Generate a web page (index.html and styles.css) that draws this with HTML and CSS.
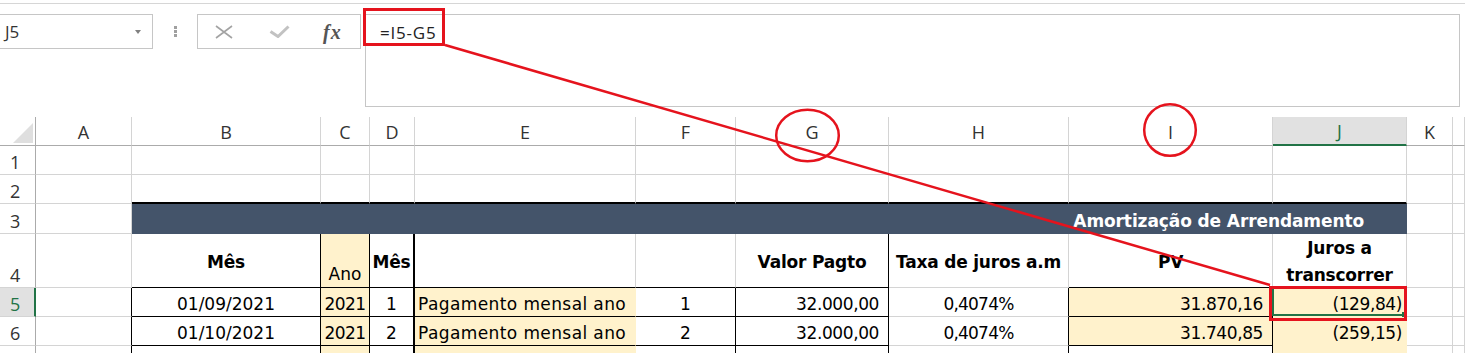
FILE: index.html
```html
<!DOCTYPE html>
<html lang="pt-BR">
<head>
    <meta charset="UTF-8">
    <meta name="viewport" content="width=device-width, initial-scale=1.0">
    <link rel="stylesheet" href="styles.css">
    <title>Amortização de Arrendamento</title>
</head>
<body>

    <div class="ribbon-edge"></div>

    <div class="formula-bar">
        <div class="name-box"><span>J5</span><span class="caret"></span></div>
        <div class="grip"><i></i><i></i><i></i></div>
        <div class="fx-box">
            <svg class="ico-x" width="18" height="14" viewBox="0 0 18 14"><path d="M1 1L17 13M17 1L1 13" stroke="#a3a3a3" stroke-width="1.6" fill="none"/></svg>
            <svg class="ico-ok" width="21" height="13" viewBox="0 0 21 13"><path d="M1.5 6.5L9 11.5L19.5 1.5" stroke="#c2c2c2" stroke-width="3" fill="none"/></svg>
            <span class="fx">fx</span>
        </div>
        <div class="formula-input">=I5-G5</div>
    </div>

    <div class="sheet">
        <!-- column headers -->
        <div class="corner"></div>
        <div class="ch">A</div>
        <div class="ch">B</div>
        <div class="ch">C</div>
        <div class="ch">D</div>
        <div class="ch">E</div>
        <div class="ch">F</div>
        <div class="ch">G</div>
        <div class="ch">H</div>
        <div class="ch">I</div>
        <div class="ch sel-col">J</div>
        <div class="ch">K</div>
        <div class="ch"></div>

        <!-- row 1 -->
        <div class="rh">1</div>
        <div></div><div></div><div></div><div></div><div></div><div></div>
        <div></div><div></div><div></div><div></div><div></div><div></div>

        <!-- row 2 -->
        <div class="rh">2</div>
        <div></div>
        <div class="top-rule"></div><div class="top-rule"></div><div class="top-rule"></div>
        <div class="top-rule"></div><div class="top-rule"></div><div class="top-rule"></div>
        <div class="top-rule"></div><div class="top-rule"></div><div class="top-rule"></div>
        <div></div><div></div>

        <!-- row 3 -->
        <div class="rh">3</div>
        <div></div>
        <div class="bar">Amortização de Arrendamento</div>
        <div></div><div></div>

        <!-- row 4 -->
        <div class="rh">4</div>
        <div></div>
        <div class="hd kr kb">Mês</div>
        <div class="y ano kr kb">Ano</div>
        <div class="hd kr2 kb">Mês</div>
        <div class="kb"></div>
        <div class="kb"></div>
        <div class="hd kr kb">Valor Pagto</div>
        <div class="hd">Taxa de juros a.m</div>
        <div class="hd kb">PV</div>
        <div class="hd wrap">Juros a<br>transcorrer</div>
        <div></div><div></div>

        <!-- row 5 -->
        <div class="rh sel-row">5</div>
        <div class="kr"></div>
        <div class="date kr kb">01/09/2021</div>
        <div class="y yr kr kb">2021</div>
        <div class="kr2 kb">1</div>
        <div class="y txt kb">Pagamento mensal ano</div>
        <div class="kr kb">1</div>
        <div class="num kr kb">32.000,00</div>
        <div class="pct kr">0,4074%</div>
        <div class="y num kr kb">31.870,16</div>
        <div class="y num tight sel">(129,84)</div>
        <div></div><div></div>

        <!-- row 6 -->
        <div class="rh">6</div>
        <div class="kr"></div>
        <div class="date kr kb">01/10/2021</div>
        <div class="y yr kr kb">2021</div>
        <div class="kr2 kb">2</div>
        <div class="y txt kb">Pagamento mensal ano</div>
        <div class="kr kb">2</div>
        <div class="num kr kb">32.000,00</div>
        <div class="pct kr">0,4074%</div>
        <div class="y num kr kb">31.740,85</div>
        <div class="y num tight">(259,15)</div>
        <div></div><div></div>

        <!-- row 7, only its top edge is in view -->
        <div class="rh"></div>
        <div class="kr"></div>
        <div class="kr"></div>
        <div class="y kr"></div>
        <div class="kr2"></div>
        <div class="y"></div>
        <div class="kr"></div>
        <div class="kr"></div>
        <div class="kr"></div>
        <div class="kr"></div>
        <div class="y"></div>
        <div></div><div></div>
    </div>

    <!-- red annotations drawn over the sheet -->
    <svg class="marks" width="1465" height="353" viewBox="0 0 1465 353">
        <g fill="none" stroke="#e5131d">
            <rect x="364.5" y="9.5" width="79" height="35" stroke-width="3"/>
            <line x1="445" y1="45" x2="1270" y2="285" stroke-width="2.5"/>
            <ellipse cx="807.5" cy="135.5" rx="31.3" ry="25.7" stroke-width="2.5"/>
            <ellipse cx="1170" cy="130" rx="25.8" ry="25.8" stroke-width="2.5"/>
            <rect x="1270.5" y="287.5" width="135" height="32" stroke-width="3"/>
        </g>
    </svg>

</body>
</html>
```

FILE: styles.css
```css
body {
    margin: 0;
    width: 1465px;
    height: 353px;
    overflow: hidden;
    position: relative;
    background: #fff;
    font-family: "Open Sans", Arial, sans-serif;
}

/* formula bar */

.ribbon-edge {
    height: 3px;
    border-bottom: 1px solid #d6d6d6;
}

.formula-bar {
    display: flex;
    align-items: flex-start;
    margin-top: 10px;
    height: 93px;
}

.name-box {
    box-sizing: border-box;
    width: 154px;
    height: 35px;
    margin-left: -1px;
    border: 1px solid #c6c6c6;
    display: flex;
    align-items: center;
    padding-left: 5px;
    font-size: 17px;
    color: #333;
}

.caret {
    margin-left: auto;
    margin-right: 11px;
    border-left: 3.5px solid transparent;
    border-right: 3.5px solid transparent;
    border-top: 4px solid #808080;
}

.grip {
    width: 44px;
    height: 35px;
    display: flex;
    flex-direction: column;
    align-items: center;
    justify-content: center;
    gap: 1px;
}

.grip i {
    width: 3px;
    height: 3px;
    background: #a0a0a0;
}

.fx-box {
    box-sizing: border-box;
    width: 164px;
    height: 35px;
    border: 1px solid #c6c6c6;
    display: flex;
    align-items: center;
}

.ico-x {
    margin-left: 17px;
}

.ico-ok {
    margin-left: 36px;
}

.fx {
    margin-left: 33px;
    padding-top: 2px;
    font-family: "Liberation Serif", serif;
    font-style: italic;
    font-weight: bold;
    font-size: 20px;
    letter-spacing: 1px;
    color: #555;
}

.formula-input {
    box-sizing: border-box;
    width: 1095px;
    height: 93px;
    margin-left: 4px;
    border: 1px solid #c6c6c6;
    padding: 6px 0 0 14px;
    font-size: 17px;
    letter-spacing: 0.8px;
    color: #222;
}

/* sheet grid */

.sheet {
    display: grid;
    grid-template-columns: 36px 96px 189px 49px 45px 221px 100px 153px 180px 204px 134px 46px 1fr;
    grid-template-rows: 29px 29px 29px 30px 54px 29px 29px 29px;
    margin-top: 10px;
    font-family: "DejaVu Sans", Verdana, sans-serif;
    font-size: 17px;
    color: #000;
}

.sheet > * {
    box-sizing: border-box;
    border-right: 1px solid #d4d4d4;
    border-bottom: 1px solid #d4d4d4;
    display: flex;
    align-items: flex-end;
    justify-content: center;
    padding-bottom: 2px;
    white-space: nowrap;
    overflow: hidden;
}

.corner {
    border-right-color: #ababab;
    border-bottom-color: #ababab;
    justify-content: flex-end;
    padding: 0 2px 2px 0;
}

.corner::before {
    content: "";
    width: 20px;
    height: 20px;
    background: #dfdfdf;
    clip-path: polygon(100% 0, 100% 100%, 0 100%);
}

.ch {
    font-family: "Open Sans", Arial, sans-serif;
    font-size: 18px;
    color: #333;
    align-items: center;
    padding: 1px 0 0;
    border-bottom-color: #ababab;
}

.sel-col {
    background: #e1e1e1;
    color: #217346;
    border-bottom: 2px solid #217346;
}

.rh {
    font-family: "Open Sans", Arial, sans-serif;
    font-size: 18px;
    color: #333;
    justify-content: flex-start;
    padding: 0 0 0 10px;
    border-right-color: #ababab;
}

.sel-row {
    background: #e1e1e1;
    color: #217346;
    border-right: 2px solid #217346;
}

.top-rule {
    border-bottom: 2px solid #000;
}

.bar {
    grid-column: 3 / 12;
    background: #44546a;
    border: 0;
    color: #fff;
    font-weight: bold;
    letter-spacing: -0.1px;
    justify-content: flex-end;
    padding: 0 43px 3px 0;
}

.hd {
    font-weight: bold;
    letter-spacing: -0.2px;
    align-items: center;
    padding: 2px 0 0;
}

.wrap {
    white-space: normal;
    text-align: center;
    align-items: flex-start;
    line-height: 26.5px;
    padding-top: 1px;
}

.ano {
    padding-bottom: 3px;
}

.txt {
    justify-content: flex-start;
    padding-left: 3px;
    letter-spacing: 0.4px;
}

.yr {
    letter-spacing: -0.6px;
}

.num {
    justify-content: flex-end;
    padding-right: 9px;
    letter-spacing: -0.4px;
}

.pct {
    letter-spacing: -0.8px;
}

.tight {
    padding-right: 4px;
}

.sel {
    position: relative;
    overflow: visible;
}

.sel::after {
    content: "";
    position: absolute;
    left: -1px;
    top: -1px;
    right: 0;
    bottom: 0;
    border: 2px solid #217346;
}

.sel::before {
    content: "";
    position: absolute;
    right: -1px;
    bottom: -1px;
    width: 5px;
    height: 5px;
    background: #217346;
}

/* fills and borders, after the base so they win */

.y {
    background: #fff2cc;
    border-right-color: #fff2cc;
    border-bottom-color: #fff2cc;
}

.kr {
    border-right: 1px solid #000;
}

.kr2 {
    border-right: 2px solid #000;
}

.kb {
    border-bottom: 1px solid #000;
}

.marks {
    position: absolute;
    top: 0;
    left: 0;
    pointer-events: none;
}
```
